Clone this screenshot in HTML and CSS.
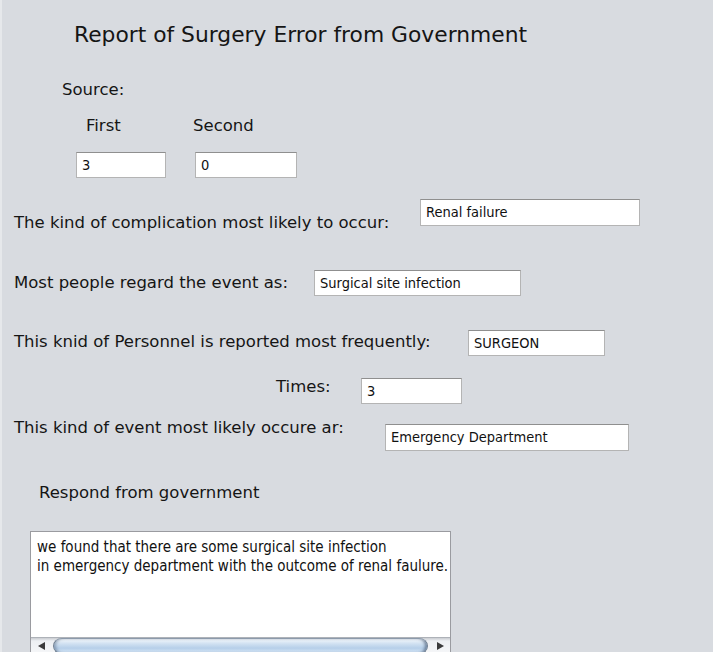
FILE: index.html
```html
<!DOCTYPE html>
<html>
<head>
<meta charset="utf-8">
<link rel="stylesheet" href="styles.css">
</head>
<body>
<div class="window">
  <div class="title">Report of Surgery Error from Government</div>
  <div class="source">Source:</div>
  <div class="src-labels"><span class="lbl-first">First</span><span class="lbl-second">Second</span></div>
  <div class="src-fields">
    <div class="field f-first">3</div>
    <div class="field f-second">0</div>
  </div>
  <div class="row row-comp">
    <span class="label l-comp">The kind of complication most likely to occur:</span>
    <div class="field f-comp">Renal failure</div>
  </div>
  <div class="row row-regard">
    <span class="label l-regard">Most people regard the event as:</span>
    <div class="field f-regard">Surgical site infection</div>
  </div>
  <div class="row row-pers">
    <span class="label l-pers">This knid of Personnel is reported most frequently:</span>
    <div class="field f-pers">SURGEON</div>
  </div>
  <div class="row row-times">
    <span class="label l-times">Times:</span>
    <div class="field f-times">3</div>
  </div>
  <div class="row row-event">
    <span class="label l-event">This kind of event most likely occure ar:</span>
    <div class="field f-event">Emergency Department</div>
  </div>
  <div class="respond">Respond from government</div>
  <div class="textarea">
    <div class="ta-text">we found that there are some surgical site infection<br>in emergency department with the outcome of renal faulure.</div>
    <div class="hscroll">
      <span class="arrow arrow-left"></span>
      <div class="thumb"></div>
      <span class="arrow arrow-right"></span>
    </div>
  </div>
</div>
</body>
</html>
```

FILE: styles.css
```css
html, body {
  margin: 0;
  padding: 0;
  height: 100%;
  overflow: hidden;
}
body {
  background: #d9dce1;
  font-family: "DejaVu Sans", Verdana, sans-serif;
  color: #151515;
}
.window {
  height: 652px;
  border-left: 2px solid #e6e8eb;
  box-sizing: border-box;
  overflow: hidden;
  background: #d8dbe0;
}
.title {
  margin-top: 22px;
  padding-left: 72px;
  font-size: 21.8px;
  line-height: 26px;
  height: 26px;
}
.source {
  margin-top: 32px;
  padding-left: 60px;
  font-size: 16.5px;
  line-height: 20px;
  height: 20px;
}
.src-labels {
  margin-top: 16px;
  display: flex;
  font-size: 16.5px;
  line-height: 20px;
  height: 20px;
  padding-left: 84px;
}
.lbl-first { width: 107px; }
.src-fields {
  margin-top: 16px;
  display: flex;
  padding-left: 74px;
  height: 26px;
}
.field {
  background: #fff;
  border: 1px solid #b4b4b4;
  border-top-color: #8f8f8f;
  box-sizing: border-box;
  height: 26px;
  font-family: "DejaVu Sans Condensed", "DejaVu Sans", sans-serif;
  font-stretch: condensed;
  font-size: 14.5px;
  line-height: 24px;
  padding-left: 5px;
  color: #111;
  white-space: nowrap;
}
.f-first { width: 90px; }
.f-second { width: 102px; margin-left: 29px; }
.row {
  display: flex;
  padding-left: 12px;
}
.label {
  font-size: 16.5px;
  line-height: 20px;
  white-space: nowrap;
  flex: none;
}
.row-comp { margin-top: 21px; height: 34px; align-items: flex-start; }
.l-comp { width: 406px; margin-top: 14px; }
.f-comp { width: 220px; height: 27px; }
.row-regard { margin-top: 37px; height: 26px; align-items: center; }
.l-regard { width: 300px; }
.f-regard { width: 207px; }
.row-pers { margin-top: 34px; height: 26px; align-items: center; }
.l-pers { width: 454px; margin-top: -3px; }
.f-pers { width: 137px; }
.row-times { margin-top: 21px; height: 26px; align-items: flex-start; }
.l-times { width: 85px; margin-left: 262px; }
.f-times { width: 101px; margin-top: 1px; }
.row-event { margin-top: 15px; height: 33px; align-items: flex-start; }
.l-event { width: 371px; }
.f-event { width: 244px; height: 27px; margin-top: 6px; }
.respond {
  margin-top: 32px;
  padding-left: 37px;
  font-size: 16.5px;
  line-height: 20px;
  height: 20px;
}
.textarea {
  margin-top: 28px;
  margin-left: 28px;
  width: 421px;
  height: 140px;
  background: #fff;
  border: 1px solid #9a9ba0;
  box-sizing: border-box;
  display: flex;
  flex-direction: column;
}
.ta-text {
  font-family: "DejaVu Sans Condensed", "DejaVu Sans", sans-serif;
  font-stretch: condensed;
  font-size: 15px;
  line-height: 19px;
  padding: 6px 0 0 6px;
  height: 99px;
  color: #111;
  white-space: nowrap;
}
.hscroll {
  height: 16px;
  display: flex;
  align-items: stretch;
  background: linear-gradient(#c9ccd1, #eef0f3 3px, #f5f6f8);
  border-top: 1px solid #aeb2b8;
}
.arrow {
  width: 20px;
  flex: none;
  display: flex;
  align-items: center;
  justify-content: center;
}
.arrow::before {
  content: "";
  width: 0;
  height: 0;
  border-top: 4px solid transparent;
  border-bottom: 4px solid transparent;
}
.arrow-left::before { border-right: 7px solid #3a3a3a; }
.arrow-right::before { border-left: 7px solid #3a3a3a; }
.thumb {
  flex: 1;
  margin: 0 2px;
  border-radius: 10px / 9px;
  border: 1px solid #6f7f92;
  border-top-color: #8c9aab;
  background: linear-gradient(#f4f8fc, #cfe0f1 35%, #b6cfe9 65%, #d6e6f6);
  box-shadow: inset -3px 0 3px -1px rgba(40,60,90,0.55), inset 3px 0 3px -1px rgba(40,60,90,0.35);
}
```
